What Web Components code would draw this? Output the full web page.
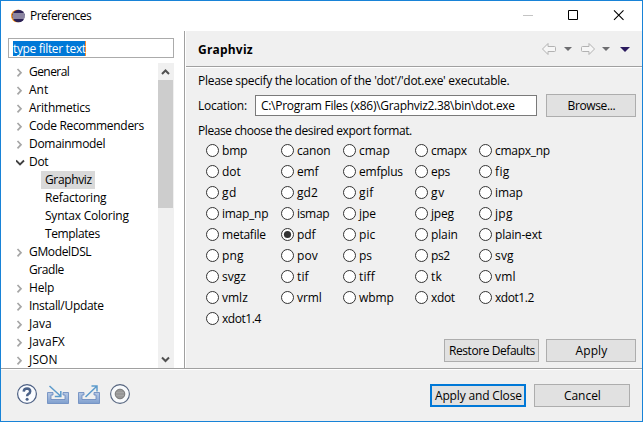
<!DOCTYPE html>
<html lang="en">
<head>
<meta charset="utf-8">
<title>Preferences</title>
<style>
html, body { margin: 0; height: 100%; overflow: hidden; }
body { font: 12px/18px "Open Sans", "Noto Sans", sans-serif; color: #000; }
</style>
</head>
<body>
<preferences-window></preferences-window>
<script>
// Label that tracks its letters so the text takes the given width.
class FitText extends HTMLElement {
  connectedCallback() {
    const root = this.attachShadow({ mode: 'open' });
    root.innerHTML = `<style>:host{display:inline-block;white-space:pre;text-align:left}span{display:inline-block}</style><span><slot></slot></span>`;
    const span = root.querySelector('span');
    const target = Number(this.getAttribute('w'));
    if (!target) return;
    const natural = span.getBoundingClientRect().width;
    span.style.letterSpacing = ((target + 0.8 - natural) / this.textContent.length).toFixed(3) + 'px';
    this.style.width = target + 'px';
  }
}

class PushButton extends HTMLElement {
  connectedCallback() {
    this.attachShadow({ mode: 'open' }).innerHTML = `<style>
      :host{display:flex;box-sizing:border-box;width:90px;height:23px;align-items:center;justify-content:center;background:#e1e1e1;border:1px solid #adadad}
      :host([default]){border:2px solid #0078d7}
    </style><slot></slot>`;
  }
}

class RadioOption extends HTMLElement {
  connectedCallback() {
    this.attachShadow({ mode: 'open' }).innerHTML = `<style>
      :host{display:flex;height:21px;align-items:center;gap:3px}
      svg{display:block;flex:none}
      slot{display:block}
    </style><svg width="13" height="13"><circle cx="6.5" cy="6.5" r="6" fill="#fff" stroke="#333"/>${this.hasAttribute('checked') ? '<circle cx="6.5" cy="6.5" r="3.6" fill="#333"/>' : ''}</svg><slot></slot>`;
  }
}

class TreeItem extends HTMLElement {
  connectedCallback() {
    const state = this.getAttribute('state');
    const icon = state === 'closed'
      ? '<path d="M1.500 2 5 5.700 1.500 9.400" fill="none" stroke="#a6a6a6" stroke-width="1.700"/>'
      : state === 'open' ? '<path d="M0 3.500 4 7.500 8 3.500" fill="none" stroke="#404040" stroke-width="1.800"/>' : '';
    this.attachShadow({ mode: 'open' }).innerHTML = `<style>
      :host{display:flex;height:18px;align-items:center}
      svg{display:block;margin:1px 4px 0 15px;flex:none}
      .t{display:block;height:18px}
      :host([child]) .t{padding:0 4px;margin-left:12px}
      :host([selected]) .t{background:#d9d9d9}
    </style><svg width="9" height="11">${icon}</svg><div class="t"><slot></slot></div>`;
  }
}

class ScrollTrack extends HTMLElement {
  connectedCallback() {
    this.attachShadow({ mode: 'open' }).innerHTML = `<style>
      :host{display:flex;flex-direction:column;width:16px;height:305px;background:#f0f0f0}
      .thumb{height:128px;flex:none;width:15px;background:#cdcdcd}
      .gap{flex:1}
      svg{display:block;flex:none}
    </style><svg width="16" height="17"><path d="M4 11 7.500 7.500 11 11" fill="none" stroke="#505050" stroke-width="2"/></svg>
    <div class="thumb"></div><div class="gap"></div>
    <svg width="16" height="17"><path d="M4 6.500 7.500 10 11 6.500" fill="none" stroke="#505050" stroke-width="2"/></svg>`;
  }
}

class TitleBar extends HTMLElement {
  connectedCallback() {
    this.attachShadow({ mode: 'open' }).innerHTML = `<style>
      :host{display:flex;height:30px;align-items:center;background:#fff;box-sizing:border-box}
      .logo{margin-left:10px;margin-right:5px}
      .controls{margin-left:auto}
      svg{display:block}
    </style>
    <svg class="logo" width="14" height="14" viewBox="0 0 14 14"><circle cx="6.300" cy="7" r="6.300" fill="#f7941e"/><circle cx="7.600" cy="7" r="6.300" fill="#2c2255"/><path d="M2 5h11.500M1.500 7h12.300M2 9h11.500" stroke="#fff" stroke-width="1" stroke-opacity=".9"/></svg>
    <fit-text w="60.5">Preferences</fit-text>
    <svg class="controls" width="120" height="30" fill="none"><path d="M1 14.500h10" stroke="#c4c4c4"/><path d="M46.500 9.500h9v9h-9z" stroke="#000"/><path d="M92 9.300 101.500 18.800M101.500 9.300 92 18.800" stroke="#000" stroke-width="1.100"/></svg>`;
  }
}

class PreferenceTree extends HTMLElement {
  connectedCallback() {
    const rows = [['General', 39.5, 'closed'], ['Ant', 18.5, 'closed'], ['Arithmetics', 60.5, 'closed'],
      ['Code Recommenders', 114, 'closed'], ['Domainmodel', 75.5, 'closed'], ['Dot', 18.5, 'open'],
      ['Graphviz', 46, 'child selected'], ['Refactoring', 60.5, 'child'], ['Syntax Coloring', 83, 'child'],
      ['Templates', 54, 'child'], ['GModelDSL', 61.5, 'closed'], ['Gradle', 34, ''], ['Help', 24.5, 'closed'],
      ['Install/Update', 74, 'closed'], ['Java', 22, 'closed'], ['JavaFX', 35, 'closed'], ['JSON', 28, 'closed']];
    this.attachShadow({ mode: 'open' }).innerHTML = `<style>
      :host{display:flex;flex-direction:column;width:183px;background:#fff;overflow:hidden}
      .filter{box-sizing:border-box;width:166px;height:20px;margin:7px 0 5px 7px;border:1px solid #ababab;display:flex;align-items:center;padding-left:4px}
      .sel{background:#0078d7;color:#fff;height:15px;line-height:15px;width:72px;border-right:1px solid #ff8728}
      .body{display:flex;height:305px;overflow:hidden}
      .rows{width:157px}
    </style>
    <div class="filter"><div class="sel"><fit-text w="72">type filter text</fit-text></div></div>
    <div class="body"><div class="rows">${rows.map(([t, w, s]) =>
      `<tree-item ${s.startsWith('child') ? s : `state="${s}"`}><fit-text w="${w}">${t}</fit-text></tree-item>`).join('')}</div><scroll-track></scroll-track></div>`;
  }
}

class ExportFormats extends HTMLElement {
  connectedCallback() {
    const formats = [
      ['bmp', 24.5], ['canon', 32.5], ['cmap', 30], ['cmapx', 35], ['cmapx_np', 54],
      ['dot', 18], ['emf', 20.5], ['emfplus', 43], ['eps', 18], ['fig', 14],
      ['gd', 14], ['gd2', 20], ['gif', 14], ['gv', 13], ['imap', 27],
      ['imap_np', 45.5], ['ismap', 31.5], ['jpe', 16], ['jpeg', 22], ['jpg', 17],
      ['metafile', 43], ['pdf', 17.5], ['pic', 15.5], ['plain', 26], ['plain-ext', 46],
      ['png', 21], ['pov', 20], ['ps', 12], ['ps2', 18], ['svg', 18],
      ['svgz', 23], ['tif', 11], ['tiff', 15], ['tk', 10], ['vml', 20],
      ['vmlz', 25], ['vrml', 24], ['wbmp', 34], ['xdot', 23], ['xdot1.2', 38], ['xdot1.4', 38]];
    this.attachShadow({ mode: 'open' }).innerHTML = `<style>
      :host{display:grid;grid-template-columns:75px 62px 72px 64px 80px;grid-auto-rows:21px}
    </style>` + formats.map(([t, w]) => `<radio-option ${t === 'pdf' ? 'checked' : ''}><fit-text w="${w}">${t}</fit-text></radio-option>`).join('');
  }
}

class PreferencePage extends HTMLElement {
  connectedCallback() {
    this.attachShadow({ mode: 'open' }).innerHTML = `<style>
      :host{display:flex;flex-direction:column;flex:1;background:#f0f0f0;border-left:1px solid #a0a0a0;box-shadow:inset 1px 0 #fff}
      header{height:35px;box-sizing:content-box;border-bottom:1px solid #a0a0a0;box-shadow:0 1px #fff;display:flex;align-items:center;justify-content:space-between;padding-left:12px;margin-left:1px}
      header fit-text{font-weight:700;margin-top:2px}
      header svg{display:block;margin-right:11px}
      .body{display:flex;flex-direction:column;padding:5px 6px 0 13px}
      .loc{display:flex;align-items:center;height:23px;margin:4px 0 5px}
      .field{box-sizing:border-box;width:282px;height:21px;border:1px solid #7a7a7a;background:#fff;display:flex;align-items:center;padding-left:5px;margin:0 9px}
      export-formats{margin:0 0 0 8px}
      .buttons{display:flex;justify-content:flex-end;gap:7px;margin-top:10px}
    </style>
    <header><fit-text w="54">Graphviz</fit-text>
      <svg width="90" height="20"><g fill="#f6f6f6" stroke="#b2b2b2" stroke-linejoin="round"><path d="M1.500 10 7 4.500v3h6.500q1 0 1 1v3q0 1-1 1H7v3z"/><path d="M53.500 10 48 4.500v3h-6.500q-1 0-1 1v3q0 1 1 1h6.500v3z"/></g><g fill="#6d6d70"><path d="M23 8h8l-4 4zM61 8h8l-4 4z"/></g><path d="M79 8h10l-5 5z" fill="#2a1a5e"/></svg>
    </header>
    <div class="body">
      <fit-text w="310.5">Please specify the location of the 'dot'/'dot.exe' executable.</fit-text>
      <div class="loc"><fit-text w="48">Location:</fit-text><div class="field"><fit-text w="253">C:\\Program Files (x86)\\Graphviz2.38\\bin\\dot.exe</fit-text></div><push-button><fit-text w="47">Browse...</fit-text></push-button></div>
      <fit-text w="213">Please choose the desired export format.</fit-text>
      <export-formats></export-formats>
      <div class="buttons"><push-button style="width:95px"><fit-text w="85">Restore Defaults</fit-text></push-button><push-button><fit-text w="31">Apply</fit-text></push-button></div>
    </div>`;
  }
}

class DialogFooter extends HTMLElement {
  connectedCallback() {
    this.attachShadow({ mode: 'open' }).innerHTML = `<style>
      :host{display:flex;flex:1;align-items:flex-start;box-sizing:border-box;background:#f0f0f0;border-top:1px solid #a0a0a0;box-shadow:inset 0 1px #fff;padding:15px 12px 0 15px}
      .icons{margin-right:auto;display:block}
      push-button{width:96px;margin-left:8px}
    </style>
    <svg class="icons" width="118" height="22" viewBox="0 0 118 22" fill="none">
      <defs><linearGradient id="tray" x1="0" y1="0" x2="0" y2="1"><stop stop-color="#b7c9e5"/><stop offset="1" stop-color="#7f9fce"/></linearGradient></defs>
      <circle cx="11" cy="10" r="9.400" fill="#fafcff" stroke="#4c5f83" stroke-width="1.200"/>
      <path d="M7.700 7.700Q7.900 4.600 11.100 4.600 14.300 4.800 14.200 7.500 14.100 9.100 12.500 9.900 11.100 10.700 11.100 12.300" stroke="#4b6289" stroke-width="2.500"/><circle cx="11.100" cy="15.200" r="1.500" fill="#4b6289"/>
      <g fill="url(#tray)" stroke="#6686bd" stroke-width=".8"><path d="M31.500 8.500h5.500v2.500h-2v4.500h14v-4.500h-2v-2.500h5.500v11h-21zM62.500 8.500h5.500v2.500h-2v4.500h14v-4.500h-2v-2.500h5.500v11h-21z"/></g>
      <path d="M33.500 2 44.500 12M44.800 7v5.500h-6" stroke="#5c9acb" stroke-width="1.500"/>
      <path d="M69.500 13 80.500 2.500M75.500 2h5.500v5.500" stroke="#5c9acb" stroke-width="1.500"/>
      <circle cx="104" cy="10" r="9.400" fill="#f8fafc" stroke="#56657f" stroke-width="1.100"/><circle cx="104" cy="10" r="4.800" fill="#989898" stroke="#777"/><path d="M100 8.500h8M100 11.500h8" stroke="#aaa" stroke-opacity=".6"/>
    </svg>
    <push-button default><fit-text w="86">Apply and Close</fit-text></push-button><push-button><fit-text w="36">Cancel</fit-text></push-button>`;
  }
}

class PreferencesWindow extends HTMLElement {
  connectedCallback() {
    this.attachShadow({ mode: 'open' }).innerHTML = `<style>
      :host{display:flex;flex-direction:column;box-sizing:border-box;width:643px;height:422px;border:1px solid #1883d7;background:#fff}
      main{display:flex;height:337px}
    </style><title-bar></title-bar><main><preference-tree></preference-tree><preference-page></preference-page></main><dialog-footer></dialog-footer>`;
  }
}

customElements.define('preferences-window', PreferencesWindow);
customElements.define('title-bar', TitleBar);
customElements.define('preference-tree', PreferenceTree);
customElements.define('preference-page', PreferencePage);
customElements.define('dialog-footer', DialogFooter);
customElements.define('tree-item', TreeItem);
customElements.define('scroll-track', ScrollTrack);
customElements.define('export-formats', ExportFormats);
customElements.define('radio-option', RadioOption);
customElements.define('push-button', PushButton);
customElements.define('fit-text', FitText);
</script>
</body>
</html>
